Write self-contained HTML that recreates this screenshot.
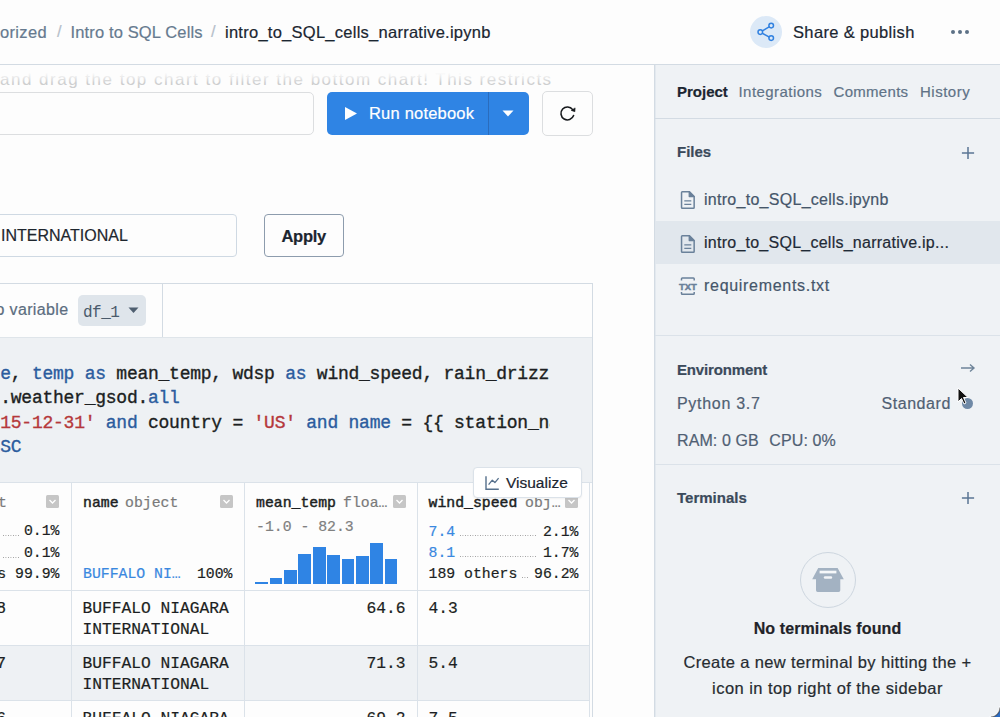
<!DOCTYPE html>
<html><head><meta charset="utf-8"><style>
html,body{margin:0;padding:0;}
body{width:1000px;height:717px;overflow:hidden;position:relative;background:#fdfdfd;font-family:'Liberation Sans', sans-serif;}
.t{position:absolute;white-space:pre;line-height:1;-webkit-text-stroke:0.2px currentColor;}
</style></head><body>
<div class="t" style="left:0px;top:70.61px;font-family:'Liberation Sans', sans-serif;font-size:17px;color:#cdcecf;font-weight:400;letter-spacing:1.5px;-webkit-text-stroke:0;">and drag the top chart to filter the bottom chart! This restricts</div>
<div style="position:absolute;left:0px;top:65px;width:654px;height:18px;background:linear-gradient(to bottom,rgba(253,253,253,1) 0%,rgba(253,253,253,0.95) 45%,rgba(253,253,253,0.55) 70%,rgba(253,253,253,0) 100%);"></div>
<div style="position:absolute;left:-10px;top:92px;width:322px;height:41px;border:1px solid #dcdee0;border-radius:5px;background:#fdfdfd;"></div>
<div style="position:absolute;left:327px;top:92px;width:201.5px;height:42.6px;background:#2f84e4;border-radius:5px;"></div>
<div style="position:absolute;left:488px;top:92px;width:1px;height:42.6px;background:#2a6cbd;"></div>
<svg style="position:absolute;left:344px;top:106px" width="14" height="15" viewBox="0 0 14 15"><path d="M1 1 L13 7.5 L1 14 Z" fill="#fff"/></svg>
<div class="t" style="left:369px;top:104.63px;font-family:'Liberation Sans', sans-serif;font-size:16.5px;color:#ffffff;font-weight:400;letter-spacing:0.2px;">Run notebook</div>
<svg style="position:absolute;left:502px;top:110px" width="12" height="7" viewBox="0 0 12 7"><path d="M0.5 0.5 L11.5 0.5 L6 6.5 Z" fill="#fff"/></svg>
<div style="position:absolute;left:542px;top:91px;width:49px;height:43px;border:1px solid #dcdee0;border-radius:5px;background:#fdfdfd;"></div>
<svg style="position:absolute;left:555px;top:100px" width="25" height="25" viewBox="0 0 25 25"><path d="M18.6 15.6 A6.5 6.5 0 1 1 17.7 9.6" fill="none" stroke="#16191c" stroke-width="1.6" stroke-linecap="round"/><path d="M16.2 10.4 L20.1 7.9 L19.9 11.7 Z" fill="#16191c" stroke="#16191c" stroke-width="0.6" stroke-linejoin="round"/></svg>
<div style="position:absolute;left:-10px;top:214px;width:245px;height:41px;border:1px solid #cfd9e3;border-radius:4px;background:#fdfdfd;"></div>
<div class="t" style="left:1px;top:228.21px;font-family:'Liberation Sans', sans-serif;font-size:16px;color:#1e262e;font-weight:400;letter-spacing:0px;">INTERNATIONAL</div>
<div style="position:absolute;left:264px;top:214px;width:78px;height:41px;border:1px solid #8d9cad;border-radius:4px;background:#fdfdfd;"></div>
<div class="t" style="left:281.5px;top:227.78px;font-family:'Liberation Sans', sans-serif;font-size:16.5px;color:#1b2530;font-weight:700;letter-spacing:-0.3px;">Apply</div>
<div style="position:absolute;left:-10px;top:283px;width:601px;height:307px;border:1px solid #d3dbe3;background:#fdfdfd;"></div>
<div style="position:absolute;left:162px;top:284px;width:1px;height:53px;background:#d3dbe3;"></div>
<div class="t" style="left:-4.5px;top:302.46px;font-family:'Liberation Sans', sans-serif;font-size:16px;color:#5c6d80;font-weight:400;letter-spacing:0.35px;">o variable</div>
<div style="position:absolute;left:78px;top:295px;width:68px;height:31px;background:#dfe5eb;border-radius:5px;"></div>
<div class="t" style="left:83px;top:304.54px;font-family:'Liberation Mono', monospace;font-size:16px;color:#4a5a6b;font-weight:400;letter-spacing:-0.48px;-webkit-text-stroke:0;">df_1</div>
<svg style="position:absolute;left:128px;top:307px" width="12" height="7" viewBox="0 0 12 7"><path d="M0.5 0.5 L10.5 0.5 L5.5 6 Z" fill="#4f5f70"/></svg>
<div style="position:absolute;left:-10px;top:337px;width:602px;height:145px;background:#eef1f4;border-top:1px solid #dfe5ea;"></div>
<div style="position:absolute;left:0;top:337px;width:550px;height:145px;overflow:hidden">
<div style="position:absolute;white-space:pre;left:-10.3px;top:24.70px;font-family:'Liberation Mono', monospace;font-size:18px;letter-spacing:-0.25px;line-height:24.33px;color:#1c1f22;-webkit-text-stroke:0.35px currentColor"><span style="color:#2b5c9e">ne</span>, <span style="color:#2b5c9e">temp</span> <span style="color:#2b5c9e">as</span> mean_temp, wdsp <span style="color:#2b5c9e">as</span> wind_speed, rain_drizzle</div>
<div style="position:absolute;white-space:pre;left:-10.3px;top:49.10px;font-family:'Liberation Mono', monospace;font-size:18px;letter-spacing:-0.25px;line-height:24.33px;color:#1c1f22;-webkit-text-stroke:0.35px currentColor">r.weather_gsod.<span style="color:#2b5c9e">all</span></div>
<div style="position:absolute;white-space:pre;left:-10.3px;top:73.70px;font-family:'Liberation Mono', monospace;font-size:18px;letter-spacing:-0.25px;line-height:24.33px;color:#1c1f22;-webkit-text-stroke:0.35px currentColor"> <span style="color:#b5383b">15-12-31&#39;</span> <span style="color:#2b5c9e">and</span> country = <span style="color:#b5383b">&#39;US&#39;</span> <span style="color:#2b5c9e">and</span> <span style="color:#2b5c9e">name</span> = {{ station_name }}</div>
<div style="position:absolute;white-space:pre;left:-10.3px;top:97.70px;font-family:'Liberation Mono', monospace;font-size:18px;letter-spacing:-0.25px;line-height:24.33px;color:#1c1f22;-webkit-text-stroke:0.35px currentColor"> <span style="color:#2b5c9e">SC</span></div>
</div>
<div style="position:absolute;left:-10px;top:482px;width:602px;height:235px;background:#fdfdfd;"></div>
<div style="position:absolute;left:-10px;top:482px;width:602px;height:1px;background:#dbe2e9;"></div>
<div style="position:absolute;left:-10px;top:590px;width:600px;height:1px;background:#dbe2e9;"></div>
<div style="position:absolute;left:-10px;top:645px;width:600px;height:55px;background:#eef1f4;"></div>
<div style="position:absolute;left:-10px;top:645px;width:600px;height:1px;background:#dbe2e9;"></div>
<div style="position:absolute;left:-10px;top:700px;width:600px;height:1px;background:#dbe2e9;"></div>
<div style="position:absolute;left:71px;top:482px;width:1px;height:235px;background:#dbe2e9;"></div>
<div style="position:absolute;left:244px;top:482px;width:1px;height:235px;background:#dbe2e9;"></div>
<div style="position:absolute;left:417px;top:482px;width:1px;height:235px;background:#dbe2e9;"></div>
<div style="position:absolute;left:589px;top:482px;width:1px;height:235px;background:#dbe2e9;"></div>
<div style="position:absolute;left:592px;top:482px;width:1px;height:235px;background:#d3dbe3;"></div>
<div class="t" style="right:1000px;top:496.16px;font-family:'Liberation Mono', monospace;font-size:14.8px;color:#7a7a7a;font-weight:400;letter-spacing:0px;right:993px;">t</div>
<svg style="position:absolute;left:46px;top:495px" width="13" height="13" viewBox="0 0 13 13"><rect x="0" y="0" width="13" height="13" rx="1.5" fill="#c6c6c6"/><path d="M3.5 5 L6.5 8 L9.5 5" fill="none" stroke="#fff" stroke-width="1.3"/></svg>
<div class="t" style="right:940.5px;top:524.16px;font-family:'Liberation Mono', monospace;font-size:14.8px;color:#1c1f22;font-weight:400;letter-spacing:0px;">0.1%</div>
<div class="t" style="right:940.5px;top:546.16px;font-family:'Liberation Mono', monospace;font-size:14.8px;color:#1c1f22;font-weight:400;letter-spacing:0px;">0.1%</div>
<div class="t" style="right:940.5px;top:567.41px;font-family:'Liberation Mono', monospace;font-size:14.8px;color:#1c1f22;font-weight:400;letter-spacing:0px;">s 99.9%</div>
<div style="position:absolute;left:3px;top:535px;width:16px;height:1px;background-image:linear-gradient(to right,#9a9a9a 40%,transparent 40%);background-size:2.5px 1px;"></div>
<div style="position:absolute;left:3px;top:557px;width:16px;height:1px;background-image:linear-gradient(to right,#9a9a9a 40%,transparent 40%);background-size:2.5px 1px;"></div>
<div class="t" style="left:83px;top:496.16px;font-family:'Liberation Mono', monospace;font-size:14.8px;color:#1c1f22;font-weight:400;letter-spacing:0px;-webkit-text-stroke:0.45px currentColor;">name</div>
<div class="t" style="left:125px;top:496.16px;font-family:'Liberation Mono', monospace;font-size:14.8px;color:#7a7a7a;font-weight:400;letter-spacing:0px;">object</div>
<svg style="position:absolute;left:219.5px;top:495px" width="13" height="13" viewBox="0 0 13 13"><rect x="0" y="0" width="13" height="13" rx="1.5" fill="#c6c6c6"/><path d="M3.5 5 L6.5 8 L9.5 5" fill="none" stroke="#fff" stroke-width="1.3"/></svg>
<div class="t" style="left:83px;top:567.41px;font-family:'Liberation Mono', monospace;font-size:14.8px;color:#3a88e0;font-weight:400;letter-spacing:0px;">BUFFALO NI…</div>
<div class="t" style="right:767.5px;top:567.41px;font-family:'Liberation Mono', monospace;font-size:14.8px;color:#1c1f22;font-weight:400;letter-spacing:0px;">100%</div>
<div class="t" style="left:256px;top:496.16px;font-family:'Liberation Mono', monospace;font-size:14.8px;color:#1c1f22;font-weight:400;letter-spacing:0px;-webkit-text-stroke:0.45px currentColor;">mean_temp</div>
<div class="t" style="left:343px;top:496.16px;font-family:'Liberation Mono', monospace;font-size:14.8px;color:#7a7a7a;font-weight:400;letter-spacing:0px;">floa…</div>
<svg style="position:absolute;left:392.5px;top:495px" width="13" height="13" viewBox="0 0 13 13"><rect x="0" y="0" width="13" height="13" rx="1.5" fill="#c6c6c6"/><path d="M3.5 5 L6.5 8 L9.5 5" fill="none" stroke="#fff" stroke-width="1.3"/></svg>
<div class="t" style="left:256px;top:520.26px;font-family:'Liberation Mono', monospace;font-size:14.8px;color:#808080;font-weight:400;letter-spacing:0px;">-1.0 - 82.3</div>
<div style="position:absolute;left:255.4px;top:581.5px;width:12.7px;height:2.5px;background:#2f84e4;"></div>
<div style="position:absolute;left:269.76px;top:578.4px;width:12.7px;height:5.6px;background:#2f84e4;"></div>
<div style="position:absolute;left:284.12px;top:570.3px;width:12.7px;height:13.7px;background:#2f84e4;"></div>
<div style="position:absolute;left:298.48px;top:554.3px;width:12.7px;height:29.7px;background:#2f84e4;"></div>
<div style="position:absolute;left:312.84px;top:546.7px;width:12.7px;height:37.3px;background:#2f84e4;"></div>
<div style="position:absolute;left:327.2px;top:554.7px;width:12.7px;height:29.3px;background:#2f84e4;"></div>
<div style="position:absolute;left:341.56px;top:558.8px;width:12.7px;height:25.2px;background:#2f84e4;"></div>
<div style="position:absolute;left:355.92px;top:556.1px;width:12.7px;height:27.9px;background:#2f84e4;"></div>
<div style="position:absolute;left:370.28px;top:543.4px;width:12.7px;height:40.6px;background:#2f84e4;"></div>
<div style="position:absolute;left:384.64px;top:559.4px;width:12.7px;height:24.6px;background:#2f84e4;"></div>
<div class="t" style="left:428.5px;top:495.86px;font-family:'Liberation Mono', monospace;font-size:14.8px;color:#1c1f22;font-weight:400;letter-spacing:0px;-webkit-text-stroke:0.45px currentColor;">wind_speed</div>
<div class="t" style="left:525px;top:495.86px;font-family:'Liberation Mono', monospace;font-size:14.8px;color:#7a7a7a;font-weight:400;letter-spacing:0px;">obj…</div>
<svg style="position:absolute;left:565px;top:495px" width="13" height="13" viewBox="0 0 13 13"><rect x="0" y="0" width="13" height="13" rx="1.5" fill="#c6c6c6"/><path d="M3.5 5 L6.5 8 L9.5 5" fill="none" stroke="#fff" stroke-width="1.3"/></svg>
<div class="t" style="left:428.5px;top:524.56px;font-family:'Liberation Mono', monospace;font-size:14.8px;color:#3a88e0;font-weight:400;letter-spacing:0px;">7.4</div>
<div class="t" style="left:428.5px;top:545.76px;font-family:'Liberation Mono', monospace;font-size:14.8px;color:#3a88e0;font-weight:400;letter-spacing:0px;">8.1</div>
<div class="t" style="right:421.5px;top:524.56px;font-family:'Liberation Mono', monospace;font-size:14.8px;color:#1c1f22;font-weight:400;letter-spacing:0px;">2.1%</div>
<div class="t" style="right:421.5px;top:545.76px;font-family:'Liberation Mono', monospace;font-size:14.8px;color:#1c1f22;font-weight:400;letter-spacing:0px;">1.7%</div>
<div class="t" style="left:428.5px;top:566.96px;font-family:'Liberation Mono', monospace;font-size:14.8px;color:#1c1f22;font-weight:400;letter-spacing:0px;">189 others</div>
<div class="t" style="right:421.5px;top:566.96px;font-family:'Liberation Mono', monospace;font-size:14.8px;color:#1c1f22;font-weight:400;letter-spacing:0px;">96.2%</div>
<div style="position:absolute;left:460px;top:535px;width:77px;height:1px;background-image:linear-gradient(to right,#9a9a9a 40%,transparent 40%);background-size:2.5px 1px;"></div>
<div style="position:absolute;left:460px;top:556px;width:77px;height:1px;background-image:linear-gradient(to right,#9a9a9a 40%,transparent 40%);background-size:2.5px 1px;"></div>
<div style="position:absolute;left:522px;top:577px;width:7px;height:1px;background-image:linear-gradient(to right,#9a9a9a 40%,transparent 40%);background-size:2.5px 1px;"></div>
<div class="t" style="right:994px;top:600.54px;font-family:'Liberation Mono', monospace;font-size:16.25px;color:#1c1f22;font-weight:400;letter-spacing:0px;">8</div>
<div class="t" style="right:994px;top:655.79px;font-family:'Liberation Mono', monospace;font-size:16.25px;color:#1c1f22;font-weight:400;letter-spacing:0px;">7</div>
<div class="t" style="right:994px;top:711.04px;font-family:'Liberation Mono', monospace;font-size:16.25px;color:#1c1f22;font-weight:400;letter-spacing:0px;">6</div>
<div class="t" style="left:82.5px;top:600.54px;font-family:'Liberation Mono', monospace;font-size:16.25px;color:#1c1f22;font-weight:400;letter-spacing:0px;">BUFFALO NIAGARA</div>
<div class="t" style="left:82.5px;top:621.79px;font-family:'Liberation Mono', monospace;font-size:16.25px;color:#1c1f22;font-weight:400;letter-spacing:0px;">INTERNATIONAL</div>
<div class="t" style="left:82.5px;top:655.79px;font-family:'Liberation Mono', monospace;font-size:16.25px;color:#1c1f22;font-weight:400;letter-spacing:0px;">BUFFALO NIAGARA</div>
<div class="t" style="left:82.5px;top:677.04px;font-family:'Liberation Mono', monospace;font-size:16.25px;color:#1c1f22;font-weight:400;letter-spacing:0px;">INTERNATIONAL</div>
<div class="t" style="left:82.5px;top:711.04px;font-family:'Liberation Mono', monospace;font-size:16.25px;color:#1c1f22;font-weight:400;letter-spacing:0px;">BUFFALO NIAGARA</div>
<div class="t" style="left:82.5px;top:732.29px;font-family:'Liberation Mono', monospace;font-size:16.25px;color:#1c1f22;font-weight:400;letter-spacing:0px;">INTERNATIONAL</div>
<div class="t" style="right:594.5px;top:600.54px;font-family:'Liberation Mono', monospace;font-size:16.25px;color:#1c1f22;font-weight:400;letter-spacing:0px;">64.6</div>
<div class="t" style="right:594.5px;top:655.79px;font-family:'Liberation Mono', monospace;font-size:16.25px;color:#1c1f22;font-weight:400;letter-spacing:0px;">71.3</div>
<div class="t" style="right:594.5px;top:711.04px;font-family:'Liberation Mono', monospace;font-size:16.25px;color:#1c1f22;font-weight:400;letter-spacing:0px;">69.2</div>
<div class="t" style="left:428.5px;top:600.54px;font-family:'Liberation Mono', monospace;font-size:16.25px;color:#1c1f22;font-weight:400;letter-spacing:0px;">4.3</div>
<div class="t" style="left:428.5px;top:655.79px;font-family:'Liberation Mono', monospace;font-size:16.25px;color:#1c1f22;font-weight:400;letter-spacing:0px;">5.4</div>
<div class="t" style="left:428.5px;top:711.04px;font-family:'Liberation Mono', monospace;font-size:16.25px;color:#1c1f22;font-weight:400;letter-spacing:0px;">7.5</div>
<div style="position:absolute;left:473px;top:466.5px;width:106.5px;height:29px;background:#fff;border:1px solid #dbe2e9;border-radius:4px;box-shadow:0 1px 2px rgba(0,0,0,0.05);"></div>
<svg style="position:absolute;left:480px;top:470px" width="25" height="25" viewBox="0 0 25 25"><path d="M6 6.3 V19.3 H18.8" fill="none" stroke="#56708c" stroke-width="1.4"/><path d="M8.6 14.6 L12.3 10.2 L14.9 12.6 L18.6 8.2" fill="none" stroke="#56708c" stroke-width="1.3" stroke-linejoin="round"/></svg>
<div class="t" style="left:506px;top:474.63px;font-family:'Liberation Sans', sans-serif;font-size:15.5px;color:#1b2530;font-weight:400;letter-spacing:0px;">Visualize</div>
<div style="position:absolute;left:0px;top:0px;width:1000px;height:64px;background:#fdfdfd;"></div>
<div style="position:absolute;left:0px;top:64px;width:1000px;height:1px;background:#d3dbe3;"></div>
<div class="t" style="right:953px;top:23.53px;font-family:'Liberation Sans', sans-serif;font-size:16.5px;color:#667a8f;font-weight:400;letter-spacing:0.35px;">orized</div>
<div class="t" style="left:57px;top:23.03px;font-family:'Liberation Sans', sans-serif;font-size:16.5px;color:#b5bfca;font-weight:400;letter-spacing:0px;">/</div>
<div class="t" style="left:70.5px;top:23.53px;font-family:'Liberation Sans', sans-serif;font-size:16.5px;color:#667a8f;font-weight:400;letter-spacing:0.14px;">Intro to SQL Cells</div>
<div class="t" style="left:211px;top:23.03px;font-family:'Liberation Sans', sans-serif;font-size:16.5px;color:#b5bfca;font-weight:400;letter-spacing:0px;">/</div>
<div class="t" style="left:225px;top:23.53px;font-family:'Liberation Sans', sans-serif;font-size:16.5px;color:#1b2631;font-weight:400;letter-spacing:0.26px;">intro_to_SQL_cells_narrative.ipynb</div>
<div style="position:absolute;left:750px;top:16px;width:32px;height:32px;border-radius:50%;background:#dce9f7"></div>
<svg style="position:absolute;left:750px;top:16px" width="32" height="32" viewBox="0 0 32 32"><path d="M21.2 9.6 L10.3 16.1 L21.2 22.1" fill="none" stroke="#3181e0" stroke-width="1.5"/><circle cx="21.2" cy="9.6" r="2.3" fill="#dce9f7" stroke="#3181e0" stroke-width="1.5"/><circle cx="10.3" cy="16.1" r="2.3" fill="#dce9f7" stroke="#3181e0" stroke-width="1.5"/><circle cx="21.2" cy="22.1" r="2.3" fill="#dce9f7" stroke="#3181e0" stroke-width="1.5"/></svg>
<div class="t" style="left:793px;top:24.03px;font-family:'Liberation Sans', sans-serif;font-size:16.5px;color:#1b2631;font-weight:400;letter-spacing:0.35px;">Share &amp; publish</div>
<div style="position:absolute;left:950.5px;top:30px;width:4px;height:4px;border-radius:50%;background:#5d7186"></div>
<div style="position:absolute;left:957.5px;top:30px;width:4px;height:4px;border-radius:50%;background:#5d7186"></div>
<div style="position:absolute;left:964.5px;top:30px;width:4px;height:4px;border-radius:50%;background:#5d7186"></div>
<div style="position:absolute;left:654px;top:65px;width:346px;height:652px;background:#eff2f5;border-left:1px solid #d3dbe3;"></div>
<div style="position:absolute;left:655px;top:65px;width:1px;height:652px;background:#e3e9ef;"></div>
<div class="t" style="left:677px;top:83.80px;font-family:'Liberation Sans', sans-serif;font-size:15px;color:#1b2631;font-weight:700;letter-spacing:0px;">Project</div>
<div class="t" style="left:738.5px;top:83.80px;font-family:'Liberation Sans', sans-serif;font-size:15px;color:#5f7287;font-weight:400;letter-spacing:0.45px;">Integrations</div>
<div class="t" style="left:833.5px;top:83.80px;font-family:'Liberation Sans', sans-serif;font-size:15px;color:#5f7287;font-weight:400;letter-spacing:0.3px;">Comments</div>
<div class="t" style="left:920px;top:83.80px;font-family:'Liberation Sans', sans-serif;font-size:15px;color:#5f7287;font-weight:400;letter-spacing:0.5px;">History</div>
<div style="position:absolute;left:655px;top:118px;width:345px;height:1px;background:#d3dbe3;"></div>
<div class="t" style="left:677px;top:144.30px;font-family:'Liberation Sans', sans-serif;font-size:15px;color:#3b4a5b;font-weight:700;letter-spacing:0px;">Files</div>
<svg style="position:absolute;left:959.5px;top:145px" width="16" height="16" viewBox="0 0 16 16"><path d="M8 1.9 V14.1 M1.9 8 H14.1" stroke="#5b7594" stroke-width="1.5"/></svg>
<div style="position:absolute;left:655px;top:221px;width:345px;height:43px;background:#e1e7ed;"></div>
<svg style="position:absolute;left:672px;top:186px" width="30" height="28" viewBox="0 0 30 28"><path d="M10.3 5.65 H17.2 L22.15 10.6 V21.4 Q22.15 22.15 21.4 22.15 H10.3 Q9.55 22.15 9.55 21.4 V6.4 Q9.55 5.65 10.3 5.65 Z" fill="none" stroke="#6a819a" stroke-width="1.5" stroke-linejoin="round"/><path d="M17.2 5.65 V10.6 H22.15 Z" fill="#6a819a" stroke="#6a819a" stroke-width="1.2" stroke-linejoin="round"/><path d="M12.3 14.8 H19.3 M12.3 18.4 H19.3" stroke="#6a819a" stroke-width="1.3"/></svg>
<div class="t" style="left:704px;top:191.96px;font-family:'Liberation Sans', sans-serif;font-size:16px;color:#45566a;font-weight:400;letter-spacing:0.28px;">intro_to_SQL_cells.ipynb</div>
<svg style="position:absolute;left:672px;top:229.5px" width="30" height="28" viewBox="0 0 30 28"><path d="M10.3 5.65 H17.2 L22.15 10.6 V21.4 Q22.15 22.15 21.4 22.15 H10.3 Q9.55 22.15 9.55 21.4 V6.4 Q9.55 5.65 10.3 5.65 Z" fill="none" stroke="#6a819a" stroke-width="1.5" stroke-linejoin="round"/><path d="M17.2 5.65 V10.6 H22.15 Z" fill="#6a819a" stroke="#6a819a" stroke-width="1.2" stroke-linejoin="round"/><path d="M12.3 14.8 H19.3 M12.3 18.4 H19.3" stroke="#6a819a" stroke-width="1.3"/></svg>
<div class="t" style="left:704px;top:235.46px;font-family:'Liberation Sans', sans-serif;font-size:16px;color:#1f2a36;font-weight:400;letter-spacing:0.25px;">intro_to_SQL_cells_narrative.ip...</div>
<svg style="position:absolute;left:672px;top:272px" width="30" height="28" viewBox="0 0 30 28"><path d="M9.5 8.6 V6.8 Q9.5 6 10.3 6 H21.4 Q22.2 6 22.2 6.8 V8.6 M9.5 20.1 V21.5 Q9.5 22.3 10.3 22.3 H21.4 Q22.2 22.3 22.2 21.5 V20.1" fill="none" stroke="#6a819a" stroke-width="1.5"/><text x="7" y="17.8" textLength="17.8" lengthAdjust="spacingAndGlyphs" font-family="Liberation Sans" font-weight="700" font-size="9.4" fill="#6a819a" stroke="#6a819a" stroke-width="0.45">TXT</text></svg>
<div class="t" style="left:704px;top:278.06px;font-family:'Liberation Sans', sans-serif;font-size:16px;color:#45566a;font-weight:400;letter-spacing:0.7px;">requirements.txt</div>
<div style="position:absolute;left:655px;top:335px;width:345px;height:1px;background:#dbe2e9;"></div>
<div class="t" style="left:677px;top:362.30px;font-family:'Liberation Sans', sans-serif;font-size:15px;color:#3b4a5b;font-weight:700;letter-spacing:-0.15px;">Environment</div>
<svg style="position:absolute;left:960px;top:362px" width="16" height="12" viewBox="0 0 16 12"><path d="M1 6 H14 M10 2.5 L14 6 L10 9.5" fill="none" stroke="#6f8499" stroke-width="1.4"/></svg>
<div class="t" style="left:677px;top:396.46px;font-family:'Liberation Sans', sans-serif;font-size:16px;color:#4f6073;font-weight:400;letter-spacing:0.7px;">Python 3.7</div>
<div class="t" style="left:881.5px;top:396.46px;font-family:'Liberation Sans', sans-serif;font-size:16px;color:#4f6073;font-weight:400;letter-spacing:0.55px;">Standard</div>
<div style="position:absolute;left:962px;top:398px;width:11px;height:11px;border-radius:50%;background:#6f89a6"></div>
<div class="t" style="left:677px;top:432.96px;font-family:'Liberation Sans', sans-serif;font-size:16px;color:#4f6073;font-weight:400;letter-spacing:0.1px;">RAM: 0 GB <span style="margin-left:6px"></span>CPU: 0%</div>
<div style="position:absolute;left:655px;top:464px;width:345px;height:1px;background:#dbe2e9;"></div>
<div class="t" style="left:677px;top:490.30px;font-family:'Liberation Sans', sans-serif;font-size:15px;color:#3b4a5b;font-weight:700;letter-spacing:0px;">Terminals</div>
<svg style="position:absolute;left:959.5px;top:489.5px" width="16" height="16" viewBox="0 0 16 16"><path d="M8 1.9 V14.1 M1.9 8 H14.1" stroke="#5b7594" stroke-width="1.5"/></svg>
<div style="position:absolute;left:800px;top:552px;width:54px;height:54px;border-radius:50%;border:1px solid #cdd6df"></div>
<svg style="position:absolute;left:780px;top:540px" width="96" height="80" viewBox="0 0 96 80"><path d="M38.2 28 H57.6 L63.8 39.3 H60.3 V50.2 Q60.3 51.9 58.6 51.9 H37.7 Q36 51.9 36 50.2 V39.3 H32.2 Z" fill="#a3b2c2"/><rect x="39.6" y="30.7" width="16.8" height="2.7" fill="#f6f8fa"/><rect x="43.8" y="36.2" width="8.4" height="2.6" rx="1.3" fill="#f3f5f8"/></svg>
<div class="t" style="left:527.5px;width:600px;text-align:center;top:621.46px;font-family:'Liberation Sans', sans-serif;font-size:16px;color:#1f2328;font-weight:700;letter-spacing:0.1px;">No terminals found</div>
<div class="t" style="left:527.5px;width:600px;text-align:center;top:654.23px;font-family:'Liberation Sans', sans-serif;font-size:16.5px;color:#262b30;font-weight:400;letter-spacing:0.38px;">Create a new terminal by hitting the +</div>
<div class="t" style="left:527.5px;width:600px;text-align:center;top:679.83px;font-family:'Liberation Sans', sans-serif;font-size:16.5px;color:#262b30;font-weight:400;letter-spacing:0.45px;">icon in top right of the sidebar</div>
<svg style="position:absolute;left:980px;top:700px" width="20" height="17" viewBox="0 0 20 17"><path d="M20 6 V17 H9 A11 11 0 0 0 20 6 Z" fill="#2b6cc4"/><path d="M20 6 A11 11 0 0 1 9 17" fill="none" stroke="#fff" stroke-width="1.2"/><path d="M20 7.5 A9.5 9.5 0 0 1 11 17" fill="none" stroke="#333" stroke-width="1.2" opacity="0.6"/></svg>
<svg style="position:absolute;left:956.7px;top:387px" width="14" height="20" viewBox="0 0 14 20"><path d="M1 1 L1 15 L4.5 11.5 L7 17 L9 16 L6.5 10.5 L11 10.5 Z" fill="#111" stroke="#fff" stroke-width="1"/></svg>
</body></html>
